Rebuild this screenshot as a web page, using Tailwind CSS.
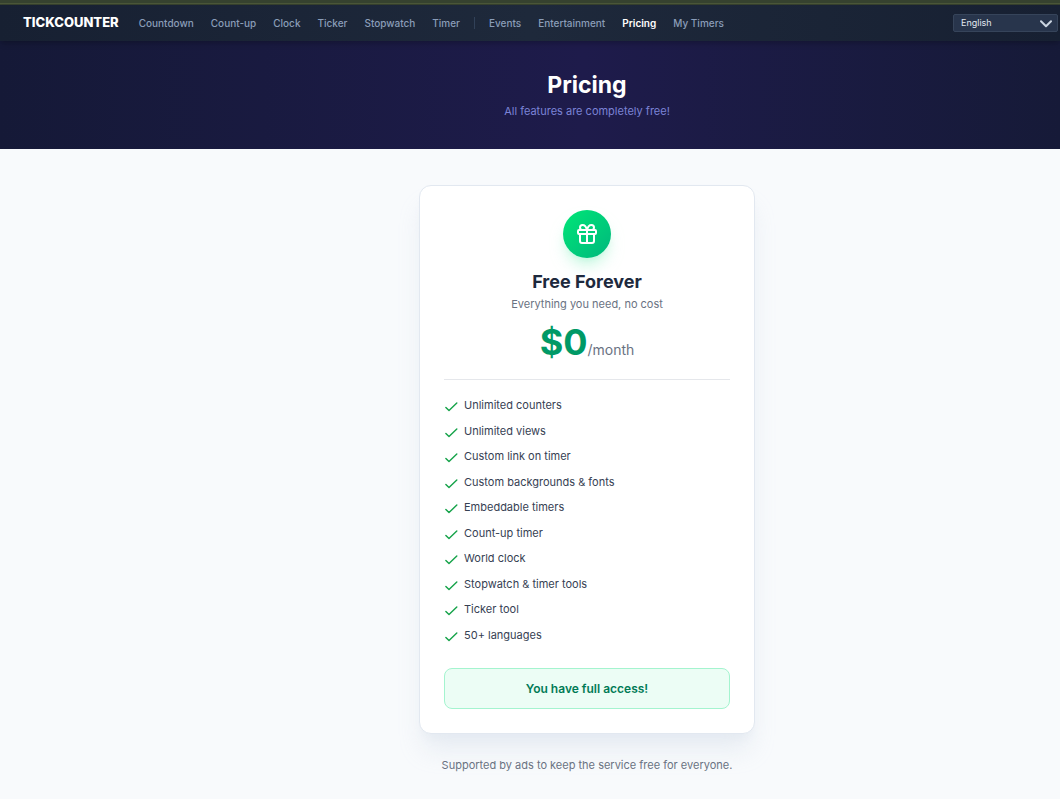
<!DOCTYPE html>
<html lang="en">
<head>
    <meta charset="UTF-8">
    <meta name="viewport" content="width=device-width, initial-scale=1.0">
    <title>Pricing - TickCounter</title>
    <script src="https://cdn.jsdelivr.net/npm/@tailwindcss/browser@4"></script>
</head>
<body class="flex min-h-screen flex-col bg-slate-50 font-['Inter',sans-serif]">
    <div class="h-[5px] border-b border-[#36402e] bg-[#36422f]">
        <div class="h-1 border-b border-[#4a5638]"></div>
    </div>

    <nav class="relative flex h-9 items-center bg-linear-to-r from-[#172032] via-[#1e293b] to-[#172032] pr-[2px] pl-[23px] text-[10px] font-medium text-[#8a9db8] shadow-md shadow-black/15">
        <a href="#" class="mr-5 text-[13px] font-extrabold text-white">TICKCOUNTER</a>
        <ul class="flex items-center gap-[17px]">
            <li><a href="#" class="hover:text-white">Countdown</a></li>
            <li><a href="#" class="hover:text-white">Count-up</a></li>
            <li><a href="#" class="hover:text-white">Clock</a></li>
            <li><a href="#" class="hover:text-white">Ticker</a></li>
            <li><a href="#" class="hover:text-white">Stopwatch</a></li>
            <li><a href="#" class="hover:text-white">Timer</a></li>
        </ul>
        <div class="mx-[14px] h-3 w-px bg-slate-700"></div>
        <ul class="flex items-center gap-[17px]">
            <li><a href="#" class="hover:text-white">Events</a></li>
            <li><a href="#" class="hover:text-white">Entertainment</a></li>
            <li><a href="#" class="font-semibold text-white" aria-current="page">Pricing</a></li>
            <li><a href="#" class="hover:text-white">My Timers</a></li>
        </ul>
        <div class="relative ml-auto">
            <select aria-label="Language" class="h-[18px] w-[105px] appearance-none rounded-xs border border-[#36445a] bg-[#28354c] pl-[7px] text-[9px] font-normal text-slate-200">
                <option>English</option>
            </select>
            <svg class="pointer-events-none absolute top-[6px] right-[6px] h-2 w-3" viewBox="0 0 12 8" fill="none" stroke="#cbd5e1" stroke-width="2" stroke-linecap="round" stroke-linejoin="round"><path d="M1 1.2l5 5 5-5"/></svg>
        </div>
    </nav>

    <header class="bg-linear-to-r from-[#151937] via-[#1e1b4b] via-55% to-[#161a38] pt-7 pb-[30px] pl-[114px] text-center">
        <h1 class="text-[23px] leading-8 font-bold text-white">Pricing</h1>
        <p class="mt-[2px] text-[11px] leading-4 text-[#7b83d6]">All features are completely free!</p>
    </header>

    <main class="flex flex-col items-center pt-9 pl-[114px]">
        <section class="w-[336px] rounded-xl border border-slate-200 bg-white p-6 shadow-xl shadow-slate-200/80">
            <div class="flex flex-col items-center border-b border-gray-200 pb-[11px]">
                <div class="flex size-12 items-center justify-center rounded-full bg-linear-to-br from-[#00e676] to-[#00b87c] shadow-lg shadow-emerald-200/60">
                    <svg class="size-6" viewBox="0 0 24 24" fill="none" stroke="white" stroke-width="2" stroke-linecap="round" stroke-linejoin="round"><rect x="3" y="8" width="18" height="4" rx="1"/><path d="M12 8v13"/><path d="M19 12v7a2 2 0 0 1-2 2H7a2 2 0 0 1-2-2v-7"/><path d="M7.500 8a2.500 2.500 0 0 1 0-5A4.800 8 0 0 1 12 8a4.800 8 0 0 1 4.500-5 2.500 2.500 0 0 1 0 5"/></svg>
                </div>
                <h2 class="mt-3 text-[18px] leading-6 font-bold text-slate-800">Free Forever</h2>
                <p class="mt-[2px] text-[11px] leading-4 text-gray-500">Everything you need, no cost</p>
                <p class="mt-3 flex items-baseline leading-9 text-gray-500"><span class="text-[36px] font-bold text-emerald-600">$0</span><span class="text-[14px]">/month</span></p>
            </div>

            <ul id="features" class="mt-[17px] flex h-[246px] flex-col justify-between text-[11px] text-gray-700"></ul>

            <p class="mt-[25px] rounded-lg border border-emerald-200 bg-emerald-50 py-3 text-center text-[12px] leading-[15px] font-semibold text-emerald-700">You have full access!</p>
        </section>
        <p class="mt-[23px] text-[11px] leading-4 text-gray-500">Supported by ads to keep the service free for everyone.</p>
    </main>

    <script>
        const features = [
            "Unlimited counters",
            "Unlimited views",
            "Custom link on timer",
            "Custom backgrounds &amp; fonts",
            "Embeddable timers",
            "Count-up timer",
            "World clock",
            "Stopwatch &amp; timer tools",
            "Ticker tool",
            "50+ languages"
        ];

        document.getElementById("features").innerHTML = features.map(feature => `
            <li class="flex h-4 items-start gap-[5px] leading-4">
                <svg class="mt-[2px] size-[15px]" viewBox="0 0 24 24" fill="none" stroke="#16a34a" stroke-width="2.300" stroke-linecap="round" stroke-linejoin="round"><path d="M3 13.500l5 5L20.500 6.500"/></svg>
                <span>${feature}</span>
            </li>`).join("");
    </script>
</body>
</html>
